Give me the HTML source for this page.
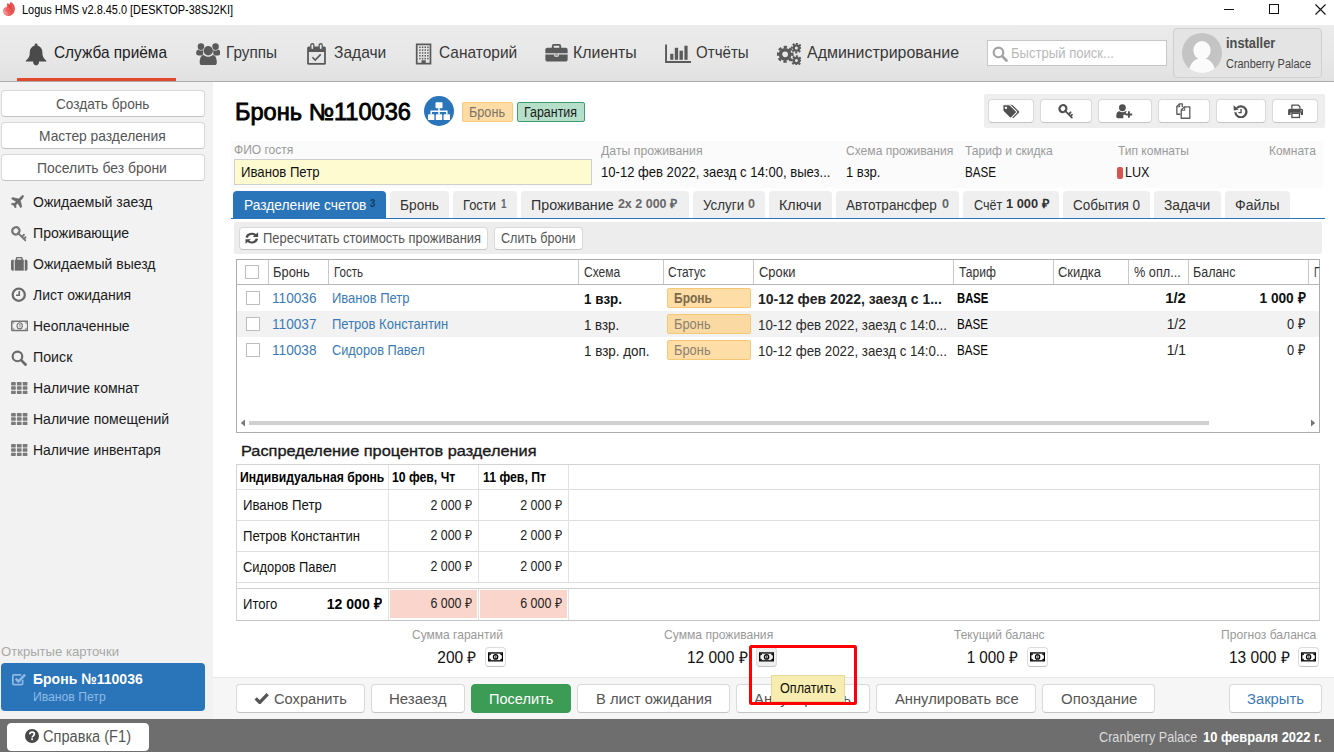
<!DOCTYPE html>
<html lang="ru"><head><meta charset="utf-8"><title>Logus HMS</title>
<style>
*{box-sizing:border-box;margin:0;padding:0}
html,body{width:1334px;height:752px;overflow:hidden;background:#fff;font-family:"Liberation Sans",sans-serif;color:#222}
.t{position:absolute;white-space:nowrap;line-height:1;transform-origin:0 50%}
.b{position:absolute}
.btn{position:absolute;background:#fff;border:1px solid #d9d9d9;border-bottom-color:#c4c4c4;border-radius:4px}
.tab{position:absolute;top:191px;height:27px;background:#efefef;border-radius:4px 4px 0 0}
.vl{position:absolute;width:1px;background:#c9c9c9}
.hl{position:absolute;height:1px;background:#dedede}
.cb{position:absolute;width:14px;height:14px;background:#fff;border:1px solid #bdbdbd}
.st{position:absolute;left:667px;width:84px;height:20px;background:rgba(253,205,125,.68);border:1px solid #f7c873;border-radius:2px}
.mb{position:absolute;width:21px;height:20px;background:#fff;border:1px solid #dcdcdc;border-bottom-color:#c2c2c2;border-radius:4px}
</style></head><body>
<div class="b" style="left:0;top:0;width:1334px;height:25px;background:#fff"></div>
<svg style="position:absolute;left:0px;top:0px" width="18" height="18" viewBox="0 0 18 18" ><defs><linearGradient id="lg" x1="0" y1="0" x2="1" y2="0"><stop offset="0" stop-color="#f39a98"/><stop offset=".55" stop-color="#e8423f"/><stop offset="1" stop-color="#ea5552"/></linearGradient></defs><path fill="url(#lg)" d="M10.500 2.100C13.500 3.500 15.300 6.500 14.900 9.600 14.500 13.300 11.800 16 8.300 16 5.200 16 2.900 13.700 2.900 10.800 2.900 8.600 4.600 6.900 7 6.900 6.800 5.600 6.900 4.200 7.300 3 8.200 3.300 9 3.900 9.700 4.600 9.800 3.700 10.100 2.900 10.500 2.100z"/><path d="M5.800 10.900a2.200 2.200 0 1 0 2.200-2.200M4.300 11.300a3.800 3.800 0 0 0 7.300 1" fill="none" stroke="#fff" stroke-width=".7" opacity=".38"/><path d="M10.300 4.200C12.300 5.700 13.300 8 12.900 10.500" fill="none" stroke="#fff" stroke-width=".6" opacity=".22"/></svg>
<div class="t" style="top:4px;font-size:12px;color:#000;left:22.00px;transform:scaleX(0.9099);">Logus HMS v2.8.45.0 [DESKTOP-38SJ2KI]</div>
<div class="b" style="left:1224px;top:9px;width:10px;height:1px;background:#111"></div>
<div class="b" style="left:1269px;top:4px;width:10px;height:10px;border:1px solid #111"></div>
<svg style="position:absolute;left:1314.500px;top:4px" width="11" height="11" viewBox="0 0 11 11"><path d="M.5.5l10 10M10.500.5l-10 10" stroke="#111" stroke-width="1.100" fill="none"/></svg>
<div class="b" style="left:0;top:25px;width:1334px;height:57px;background:linear-gradient(#ebebeb,#e7e7e7 60%,#e1e1e1);border-bottom:1px solid #adadad"></div>
<div class="b" style="left:17px;top:78px;width:159px;height:3px;background:#e2482e"></div>
<svg style="position:absolute;left:25.4px;top:42.9px" width="22.2" height="22.7" viewBox="0 0 24 24" preserveAspectRatio="none"><path fill="#4a4a4a" d="M12 .4c.9 0 1.500.6 1.500 1.500v.7c3.300.8 5.300 3.600 5.300 7 0 4.700 1.400 6.700 3.800 8.700.4.300.6.800.6 1.300H.8c0-.5.2-1 .6-1.300 2.400-2 3.800-4 3.800-8.700 0-3.400 2-6.200 5.300-7v-.7c0-.9.6-1.500 1.500-1.500zM8.900 19.600h6.200v1.100c0 1.700-1.400 3-3.100 3s-3.100-1.300-3.100-3z"/></svg>
<div class="t" style="top:44px;font-size:17px;color:#1d1d1d;left:53.70px;transform:scaleX(0.9059);">Служба приёма</div>
<svg style="position:absolute;left:195.5px;top:42.8px" width="24.5" height="22.4" viewBox="0 0 26 24" ><g fill="#5a5a5a"><circle cx="5.200" cy="3.900" r="3.500"/><circle cx="20.800" cy="3.900" r="3.500"/><path d="M0 10.800C0 8.400 1 7.200 2.600 7.200c.800.600 1.700.900 2.600.900s1.800-.300 2.600-.900l1.400.800c-1.600 1.400-2 3.200-1.600 5.400L2.600 13.500C1 13.500 0 12.500 0 10.800z"/><path d="M0 10.800C0 8.400 1 7.200 2.600 7.200c.800.600 1.700.900 2.600.900s1.800-.300 2.600-.900l1.400.800c-1.600 1.400-2 3.200-1.600 5.400L2.600 13.500C1 13.500 0 12.500 0 10.800z" transform="translate(26 0) scale(-1 1)"/><circle cx="13" cy="8.300" r="5" stroke="#e8e8e8" stroke-width="1.100" paint-order="stroke"/><path stroke="#e8e8e8" stroke-width=".9" paint-order="stroke" d="M3.800 21c0-5 1.700-8.200 4.400-8.200 1.300 1.200 3 1.900 4.800 1.900s3.500-.700 4.800-1.900c2.700 0 4.400 3.200 4.400 8.200 0 1.800-1.200 3-2.900 3H6.700c-1.700 0-2.900-1.200-2.900-3z"/></g></svg>
<div class="t" style="top:44px;font-size:17px;color:#383838;left:226.40px;transform:scaleX(0.9002);">Группы</div>
<svg style="position:absolute;left:306px;top:43px" width="21" height="22.5" viewBox="0 0 22 24" ><rect x="1" y="3.800" width="20" height="19.400" rx="1.700" fill="#5a5a5a"/><rect x="2.900" y="9.600" width="16.200" height="11.700" fill="#e7e7e7"/><rect x="4.900" y=".8" width="3.300" height="6.200" rx="1.500" fill="#e7e7e7" stroke="#5a5a5a" stroke-width="1.400"/><rect x="13.800" y=".8" width="3.300" height="6.200" rx="1.500" fill="#e7e7e7" stroke="#5a5a5a" stroke-width="1.400"/><path fill="none" stroke="#5a5a5a" stroke-width="1.700" d="M6.600 15.200l3 3 5.900-6.100"/></svg>
<div class="t" style="top:44px;font-size:17px;color:#383838;left:334.20px;transform:scaleX(0.9163);">Задачи</div>
<svg style="position:absolute;left:414.8px;top:43.2px" width="17.2" height="22" viewBox="0 0 18 24" ><rect x="1.500" y="1.500" width="15" height="21" fill="none" stroke="#5a5a5a" stroke-width="1.900"/><g fill="#5a5a5a"><rect x="4.2" y="3.8" width="1.600" height="1.700"/><rect x="7.1" y="3.8" width="1.600" height="1.700"/><rect x="10.0" y="3.8" width="1.600" height="1.700"/><rect x="12.9" y="3.8" width="1.600" height="1.700"/><rect x="4.2" y="6.9" width="1.600" height="1.700"/><rect x="7.1" y="6.9" width="1.600" height="1.700"/><rect x="10.0" y="6.9" width="1.600" height="1.700"/><rect x="12.9" y="6.9" width="1.600" height="1.700"/><rect x="4.2" y="10.0" width="1.600" height="1.700"/><rect x="7.1" y="10.0" width="1.600" height="1.700"/><rect x="10.0" y="10.0" width="1.600" height="1.700"/><rect x="12.9" y="10.0" width="1.600" height="1.700"/><rect x="4.2" y="13.1" width="1.600" height="1.700"/><rect x="7.1" y="13.1" width="1.600" height="1.700"/><rect x="10.0" y="13.1" width="1.600" height="1.700"/><rect x="12.9" y="13.1" width="1.600" height="1.700"/><rect x="4.2" y="16.2" width="1.600" height="1.700"/><rect x="7.1" y="16.2" width="1.600" height="1.700"/><rect x="10.0" y="16.2" width="1.600" height="1.700"/><rect x="12.9" y="16.2" width="1.600" height="1.700"/><rect x="6.700" y="18.800" width="4.600" height="4"/></g></svg>
<div class="t" style="top:44px;font-size:17px;color:#383838;left:438.50px;transform:scaleX(0.9105);">Санаторий</div>
<svg style="position:absolute;left:545px;top:43.2px" width="23" height="19.5" viewBox="0 0 24 21" ><path fill="none" stroke="#5a5a5a" stroke-width="2" d="M8 5.500V3.200c0-.700.500-1.200 1.200-1.200h5.600c.700 0 1.200.5 1.200 1.200v2.300"/><path fill="#5a5a5a" d="M2.200 5h19.600c1.200 0 2.200 1 2.200 2.200V11H0V7.200C0 6 1 5 2.200 5zM0 12.400h9.600v1.400c0 .6.400 1 1 1h2.800c.6 0 1-.4 1-1v-1.400H24v5.400c0 1.200-1 2.200-2.200 2.200H2.200C1 20 0 19 0 17.800z"/><rect x="10.600" y="11.600" width="2.800" height="2.200" fill="#5a5a5a" opacity=".55"/></svg>
<div class="t" style="top:44px;font-size:17px;color:#383838;left:573.00px;transform:scaleX(0.9359);">Клиенты</div>
<svg style="position:absolute;left:664.8px;top:44.3px" width="26" height="19.2" viewBox="0 0 26 19.2" ><path fill="none" stroke="#5a5a5a" stroke-width="1.900" d="M1.050 .6v17.450H26"/><g fill="#5a5a5a"><rect x="5.200" y="9.800" width="3.200" height="6"/><rect x="9.800" y="3.800" width="3.300" height="12"/><rect x="14.500" y="6.700" width="3.400" height="9.100"/><rect x="19.400" y="1.700" width="3.200" height="14.100"/></g></svg>
<div class="t" style="top:44px;font-size:17px;color:#383838;left:696.00px;transform:scaleX(0.8883);">Отчёты</div>
<svg style="position:absolute;left:776.8px;top:42.8px" width="24.4" height="22.3" viewBox="0 0 24.4 22.3" ><circle cx="8.1" cy="11.3" r="4.65" fill="none" stroke="#5a5a5a" stroke-width="3.50"/><circle cx="8.1" cy="11.3" r="7.25" fill="none" stroke="#5a5a5a" stroke-width="2.60" stroke-dasharray="3.19 2.51" transform="rotate(-12.60 8.1 11.3)"/><circle cx="19.4" cy="5" r="2.65" fill="none" stroke="#5a5a5a" stroke-width="2.30"/><circle cx="19.4" cy="5" r="4.40" fill="none" stroke="#5a5a5a" stroke-width="2.10" stroke-dasharray="2.00 1.45" transform="rotate(-13.05 19.4 5)"/><circle cx="19.4" cy="17.6" r="2.65" fill="none" stroke="#5a5a5a" stroke-width="2.30"/><circle cx="19.4" cy="17.6" r="4.40" fill="none" stroke="#5a5a5a" stroke-width="2.10" stroke-dasharray="2.00 1.45" transform="rotate(-13.05 19.4 17.6)"/></svg>
<div class="t" style="top:44px;font-size:17px;color:#383838;left:807.30px;transform:scaleX(0.9376);">Администрирование</div>
<div class="b" style="left:987px;top:40px;width:180px;height:26px;background:#fff;border:1px solid #c6c6c6"></div>
<svg style="position:absolute;left:992px;top:46.3px" width="16" height="16" viewBox="0 0 21 21" ><circle cx="8.500" cy="8.500" r="6.300" fill="none" stroke="#a2a2a2" stroke-width="2.8"/><path d="M13.300 13.300L19 19" stroke="#a2a2a2" stroke-width="3.5999999999999996" stroke-linecap="round"/></svg>
<div class="t" style="top:45px;font-size:15px;color:#b9b9b9;left:1011.00px;transform:scaleX(0.8723);">Быстрый поиск...</div>
<div class="b" style="left:1173px;top:28px;width:149px;height:50px;background:#e4e4e4;border:1px solid #cfcfcf;border-radius:4px"></div>
<svg style="position:absolute;left:1182px;top:33px" width="40" height="40" viewBox="0 0 40 40" ><defs><clipPath id="avc"><circle cx="20" cy="20" r="20"/></clipPath></defs><circle cx="20" cy="20" r="20" fill="#c4c4c4"/><g clip-path="url(#avc)" fill="#fbfbfb"><ellipse cx="20" cy="17.300" rx="8.600" ry="9.300"/><path d="M6.500 41c0-8 4.500-13.500 8.500-15h10c4 1.500 8.500 7 8.500 15z"/></g></svg>
<div class="t" style="top:36px;font-size:14.5px;color:#4d4d4d;font-weight:700;left:1225.80px;transform:scaleX(0.8865);">installer</div>
<div class="t" style="top:58px;font-size:12.5px;color:#444;left:1225.80px;transform:scaleX(0.8739);">Cranberry Palace</div>
<div class="b" style="left:0;top:82px;width:213px;height:637px;background:#f2f2f2"></div>
<div class="btn" style="left:1px;top:90px;width:204px;height:27px"></div>
<div class="t" style="top:96px;font-size:15px;color:#555;left:56.30px;transform:scaleX(0.9108);">Создать бронь</div>
<div class="btn" style="left:1px;top:122px;width:204px;height:27px"></div>
<div class="t" style="top:128px;font-size:15px;color:#555;left:39.20px;transform:scaleX(0.9207);">Мастер разделения</div>
<div class="btn" style="left:1px;top:154px;width:204px;height:27px"></div>
<div class="t" style="top:160px;font-size:15px;color:#555;left:37.40px;transform:scaleX(0.9287);">Поселить без брони</div>
<div class="t" style="top:194px;font-size:15.2px;color:#1c1c1c;left:33.30px;transform:scaleX(0.9227);">Ожидаемый заезд</div>
<svg style="position:absolute;left:10.3px;top:194.7px" width="14.5" height="14.5" viewBox="0 0 23 24" ><path fill="#6a6a6a" d="M21.600.9c1.300-.500 2.100.3 1.600 1.600-.600 1.600-1.600 3.200-2.800 4.400l-2.300 2.300 2.300 10.300-1.900 1.500-4.500-7.700-3.400 3.400c.2 1 .4 2.500.4 3.600l-1.300 1.300-2.300-4.300L3 15l1.300-1.300c1.100 0 2.600.2 3.600.4l3.400-3.400L3.600 6.200l1.500-1.900 10.300 2.300 2.300-2.300C18.900 3.100 20.400 1.500 21.600.9z" transform="translate(-1.500 0)" stroke="#6a6a6a" stroke-width="1.100" stroke-linejoin="round"/></svg>
<div class="t" style="top:225px;font-size:15.2px;color:#1c1c1c;left:33.30px;transform:scaleX(0.9299);">Проживающие</div>
<svg style="position:absolute;left:11px;top:225.5px" width="16" height="16" viewBox="0 0 23 23" ><ellipse cx="7" cy="7" rx="5.400" ry="5.100" fill="none" stroke="#777" stroke-width="3.300" transform="rotate(-45 7 7)"/><path d="M10.500 10.500L20.500 20.500M15.600 15.600l3-3M18.400 18.600l2.400-2.400" fill="none" stroke="#777" stroke-width="2.700" stroke-linecap="round"/></svg>
<div class="t" style="top:256px;font-size:15.2px;color:#1c1c1c;left:33.30px;transform:scaleX(0.9219);">Ожидаемый выезд</div>
<svg style="position:absolute;left:11px;top:256px" width="16.5" height="15.5" viewBox="0 0 24 22" ><path fill="none" stroke="#6a6a6a" stroke-width="2" d="M8 5.500V3.100c0-.600.500-1.100 1.100-1.100h5.800c.600 0 1.100.5 1.100 1.100v2.400"/><g fill="#6a6a6a"><rect x="5.400" y="5" width="13.200" height="16"/><path d="M2.200 5H4v16H2.200C1 21 0 20 0 18.800V7.200C0 6 1 5 2.200 5zM20 5h1.800C23 5 24 6 24 7.200v11.600c0 1.200-1 2.200-2.200 2.200H20z"/></g></svg>
<div class="t" style="top:287px;font-size:15.2px;color:#1c1c1c;left:33.30px;transform:scaleX(0.9198);">Лист ожидания</div>
<svg style="position:absolute;left:10.8px;top:287.2px" width="15.5" height="15.5" viewBox="0 0 22 22" ><circle cx="11" cy="11" r="8.600" fill="none" stroke="#6a6a6a" stroke-width="3.200"/><path d="M11.700 5.800v6H7.200" fill="none" stroke="#6a6a6a" stroke-width="2.300"/></svg>
<div class="t" style="top:318px;font-size:15.2px;color:#1c1c1c;left:33.30px;transform:scaleX(0.9151);">Неоплаченные</div>
<svg style="position:absolute;left:10.8px;top:320.2px" width="17.4" height="11.6" viewBox="0 0 26 16" ><rect x="1.100" y="1.100" width="23.800" height="13.800" rx=".8" fill="#f2f2f2" stroke="#777" stroke-width="2.200"/><path fill="#777" d="M2 2h3.600A3.600 3.600 0 0 1 2 5.600zM24 2h-3.600A3.600 3.600 0 0 0 24 5.600zM2 14h3.600A3.600 3.600 0 0 0 2 10.400zM24 14h-3.600A3.600 3.600 0 0 1 24 10.400z" opacity=".55"/><ellipse cx="13" cy="8" rx="4" ry="4.600" fill="#f2f2f2" stroke="#777" stroke-width="1.700"/><path d="M12.100 6.700l1.300-.9v4.600" fill="none" stroke="#777" stroke-width="1.300"/></svg>
<div class="t" style="top:349px;font-size:15.2px;color:#1c1c1c;left:33.30px;transform:scaleX(0.9360);">Поиск</div>
<svg style="position:absolute;left:11px;top:349.5px" width="16" height="16" viewBox="0 0 21 21" ><circle cx="8.500" cy="8.500" r="6.300" fill="none" stroke="#6a6a6a" stroke-width="2.8"/><path d="M13.300 13.300L19 19" stroke="#6a6a6a" stroke-width="3.5999999999999996" stroke-linecap="round"/></svg>
<div class="t" style="top:380px;font-size:15.2px;color:#1c1c1c;left:33.30px;transform:scaleX(0.9245);">Наличие комнат</div>
<svg style="position:absolute;left:11px;top:382px" width="16.5" height="12" viewBox="0 0 17.4 12.8" ><g fill="#7a7a7a"><rect x="0.0" y="0.0" width="5" height="3.600" rx=".5"/><rect x="6.2" y="0.0" width="5" height="3.600" rx=".5"/><rect x="12.4" y="0.0" width="5" height="3.600" rx=".5"/><rect x="0.0" y="4.6" width="5" height="3.600" rx=".5"/><rect x="6.2" y="4.6" width="5" height="3.600" rx=".5"/><rect x="12.4" y="4.6" width="5" height="3.600" rx=".5"/><rect x="0.0" y="9.2" width="5" height="3.600" rx=".5"/><rect x="6.2" y="9.2" width="5" height="3.600" rx=".5"/><rect x="12.4" y="9.2" width="5" height="3.600" rx=".5"/></g></svg>
<div class="t" style="top:411px;font-size:15.2px;color:#1c1c1c;left:33.30px;transform:scaleX(0.9226);">Наличие помещений</div>
<svg style="position:absolute;left:11px;top:413px" width="16.5" height="12" viewBox="0 0 17.4 12.8" ><g fill="#7a7a7a"><rect x="0.0" y="0.0" width="5" height="3.600" rx=".5"/><rect x="6.2" y="0.0" width="5" height="3.600" rx=".5"/><rect x="12.4" y="0.0" width="5" height="3.600" rx=".5"/><rect x="0.0" y="4.6" width="5" height="3.600" rx=".5"/><rect x="6.2" y="4.6" width="5" height="3.600" rx=".5"/><rect x="12.4" y="4.6" width="5" height="3.600" rx=".5"/><rect x="0.0" y="9.2" width="5" height="3.600" rx=".5"/><rect x="6.2" y="9.2" width="5" height="3.600" rx=".5"/><rect x="12.4" y="9.2" width="5" height="3.600" rx=".5"/></g></svg>
<div class="t" style="top:442px;font-size:15.2px;color:#1c1c1c;left:33.30px;transform:scaleX(0.9176);">Наличие инвентаря</div>
<svg style="position:absolute;left:11px;top:444px" width="16.5" height="12" viewBox="0 0 17.4 12.8" ><g fill="#7a7a7a"><rect x="0.0" y="0.0" width="5" height="3.600" rx=".5"/><rect x="6.2" y="0.0" width="5" height="3.600" rx=".5"/><rect x="12.4" y="0.0" width="5" height="3.600" rx=".5"/><rect x="0.0" y="4.6" width="5" height="3.600" rx=".5"/><rect x="6.2" y="4.6" width="5" height="3.600" rx=".5"/><rect x="12.4" y="4.6" width="5" height="3.600" rx=".5"/><rect x="0.0" y="9.2" width="5" height="3.600" rx=".5"/><rect x="6.2" y="9.2" width="5" height="3.600" rx=".5"/><rect x="12.4" y="9.2" width="5" height="3.600" rx=".5"/></g></svg>
<div class="t" style="top:645px;font-size:13px;color:#a8a8a8;left:1.00px;transform:scaleX(1.0077);">Открытые карточки</div>
<div class="b" style="left:1px;top:663px;width:204px;height:48px;background:#2a74ba;border-radius:4px"></div>
<svg style="position:absolute;left:10.8px;top:672.3px" width="15.6" height="14" viewBox="0 0 21 20" ><path d="M16 11v5.300c0 1-.8 1.700-1.700 1.700H3.700C2.800 18 2 17.300 2 16.300V5.700C2 4.800 2.800 4 3.700 4H14" fill="none" stroke="#8db9e3" stroke-width="2.500" /><path d="M6 9.500l4 4 9.500-9.700" fill="none" stroke="#8db9e3" stroke-width="3.500"/></svg>
<div class="t" style="top:671px;font-size:15.5px;color:#fff;font-weight:700;left:33.00px;transform:scaleX(0.9035);">Бронь №110036</div>
<div class="t" style="top:690px;font-size:13px;color:#8fbae4;left:33.00px;transform:scaleX(0.9369);">Иванов Петр</div>
<div class="t" style="top:101px;font-size:23.2px;color:#000;left:235.00px;transform:scaleX(1.0181);-webkit-text-stroke:.8px #000;">Бронь №110036</div>
<div class="b" style="left:424px;top:96px;width:30px;height:30px;border-radius:50%;background:#2a74ba"></div>
<svg style="position:absolute;left:428.3px;top:101.6px" width="22" height="18.4" viewBox="0 0 22 18" ><g fill="#fff"><rect x="7.500" y="0" width="7" height="6" rx=".8"/><rect x="0" y="12" width="6.400" height="6" rx=".8"/><rect x="7.800" y="12" width="6.400" height="6" rx=".8"/><rect x="15.600" y="12" width="6.400" height="6" rx=".8"/></g><path d="M11 6v6M3.200 12V9h15.600v3" fill="none" stroke="#fff" stroke-width="1.500"/></svg>
<div class="b" style="left:462px;top:102px;width:51px;height:20px;background:#fddca6;border:1px solid #fbc978;border-radius:2px"></div>
<div class="t" style="top:105px;font-size:14px;color:#7b7568;left:469.40px;transform:scaleX(0.9046);">Бронь</div>
<div class="b" style="left:517px;top:102px;width:68px;height:20px;background:#b5dfc9;border:1px solid #3f9f73;border-radius:2px"></div>
<div class="t" style="top:105px;font-size:14px;color:#1c1c1c;left:524.30px;transform:scaleX(0.8877);">Гарантия</div>
<div class="b" style="left:984px;top:94px;width:341px;height:34px;background:#eee;border-radius:2px"></div>
<div class="btn" style="left:988px;top:99px;width:46px;height:24px"></div>
<svg style="position:absolute;left:1001.6px;top:103.8px" width="17.8" height="14.8" viewBox="0 0 21.5 18" ><path fill="#505050" d="M1 1.800C1 1.300 1.300 1 1.800 1H8.600c.5 0 1.100.25 1.500.6l7.300 7.300c.5.500.5 1.200 0 1.700l-6.200 6.200c-.5.500-1.200.5-1.700 0L2.200 9.500C1.850 9.100 1 8.500 1 8z" transform="translate(3 0)"/><path fill="#505050" stroke="#fff" stroke-width="1.300" d="M1 1.800C1 1.300 1.300 1 1.800 1H8.600c.5 0 1.100.25 1.500.6l7.300 7.300c.5.500.5 1.200 0 1.700l-6.200 6.200c-.5.500-1.200.5-1.700 0L2.200 9.500C1.850 9.100 1 8.500 1 8z"/><circle cx="4.700" cy="4.700" r="1.500" fill="#fff"/></svg>
<div class="btn" style="left:1040px;top:99px;width:52px;height:24px"></div>
<svg style="position:absolute;left:1058.0px;top:103.8px" width="15.8" height="15.2" viewBox="0 0 23 23" ><ellipse cx="7" cy="7" rx="5.400" ry="5.100" fill="none" stroke="#505050" stroke-width="3.300" transform="rotate(-45 7 7)"/><path d="M10.500 10.500L20.500 20.500M15.600 15.600l3-3M18.400 18.600l2.400-2.400" fill="none" stroke="#505050" stroke-width="2.700" stroke-linecap="round"/></svg>
<div class="btn" style="left:1098px;top:99px;width:54px;height:24px"></div>
<svg style="position:absolute;left:1115.4px;top:104px" width="18.8" height="14.5" viewBox="0 0 22.500 20" ><circle cx="8.500" cy="5.200" r="4.700" fill="#505050"/><path fill="#505050" d="M2.400 19.500C1 19.500 0 18.600 0 17.200 0 13.400 1.300 10 4.500 10c1.100.9 2.500 1.500 4 1.500s2.900-.6 4-1.500c1.100 0 2 .4 2.700 1.100H13.400v3.600H9.800v4.800z"/><path d="M17.500 10v9M13 14.500h9" stroke="#505050" stroke-width="2.500" fill="none"/></svg>
<div class="btn" style="left:1158px;top:99px;width:52px;height:24px"></div>
<svg style="position:absolute;left:1175.4px;top:103px" width="16.8" height="16" viewBox="0 0 20 22" ><path d="M8.500 5.500V1.200h-4L1 4.700v10.800h5" fill="none" stroke="#5c5c5c" stroke-width="1.800" stroke-linejoin="round"/><path d="M1 5h3.800V1.200" fill="none" stroke="#5c5c5c" stroke-width="1.400"/><path d="M11.500 5.200h7.300V21H7V9.700z" fill="#fff" stroke="#5c5c5c" stroke-width="1.800" stroke-linejoin="round"/><path d="M7 10h4.800V5.200" fill="none" stroke="#5c5c5c" stroke-width="1.400"/></svg>
<div class="btn" style="left:1216px;top:99px;width:50px;height:24px"></div>
<svg style="position:absolute;left:1233.2px;top:103.6px" width="14.8" height="14.8" viewBox="0 0 22 22" ><path d="M3.500 12.300a8.200 8.200 0 1 0 2.300-6.400" fill="none" stroke="#505050" stroke-width="3.400"/><path d="M.8 2l.4 7.600 7.300-1.500z" fill="#505050"/><path d="M12 7.500v5.300h-4" fill="none" stroke="#505050" stroke-width="2"/></svg>
<div class="btn" style="left:1272px;top:99px;width:46px;height:24px"></div>
<svg style="position:absolute;left:1287.8px;top:104px" width="15.4" height="14.5" viewBox="0 0 22 21" ><path d="M5.500 7V1.500h9l2.500 2.500v3" fill="#fff" stroke="#505050" stroke-width="1.900" stroke-linejoin="round"/><path fill="#505050" d="M2.500 7h17c1.400 0 2.500 1.100 2.500 2.500V16h-3.500v-3.500h-15V16H0V9.500C0 8.100 1.100 7 2.500 7z"/><rect x="5.500" y="13.500" width="11" height="6" fill="#fff" stroke="#505050" stroke-width="1.900"/><circle cx="18.800" cy="9.800" r=".9" fill="#fff"/></svg>
<div class="b" style="left:231px;top:141px;width:1092px;height:47px;background:#fbfbfb"></div>
<div class="t" style="top:143px;font-size:13px;color:#9a9a9a;left:233.90px;transform:scaleX(0.9245);">ФИО гостя</div>
<div class="b" style="left:234px;top:159px;width:358px;height:26px;background:#fffbd1;border:1px solid #cfcfcf"></div>
<div class="t" style="top:164px;font-size:15px;color:#111;left:240.90px;transform:scaleX(0.8779);">Иванов Петр</div>
<div class="t" style="top:144px;font-size:13px;color:#9a9a9a;left:601.40px;transform:scaleX(0.9455);">Даты проживания</div>
<div class="t" style="top:164px;font-size:15px;color:#111;left:601.40px;transform:scaleX(0.8708);">10-12 фев 2022, заезд с 14:00, выез...</div>
<div class="t" style="top:144px;font-size:13px;color:#9a9a9a;left:845.50px;transform:scaleX(0.9286);">Схема проживания</div>
<div class="t" style="top:164px;font-size:15px;color:#111;left:845.50px;transform:scaleX(0.8689);">1 взр.</div>
<div class="t" style="top:144px;font-size:13px;color:#9a9a9a;left:965.00px;transform:scaleX(0.9291);">Тариф и скидка</div>
<div class="t" style="top:164px;font-size:15px;color:#111;left:965.00px;transform:scaleX(0.7744);">BASE</div>
<div class="t" style="top:144px;font-size:13px;color:#9a9a9a;left:1117.50px;transform:scaleX(0.9229);">Тип комнаты</div>
<div class="b" style="left:1117px;top:166.500px;width:6px;height:12px;background:#d9534f;border-radius:2px"></div>
<div class="t" style="top:164px;font-size:15px;color:#111;left:1125.00px;transform:scaleX(0.8394);">LUX</div>
<div class="t" style="top:144px;font-size:13px;color:#9a9a9a;left:1269.00px;transform:scaleX(0.9193);">Комната</div>
<div class="b" style="left:231px;top:218px;width:1094px;height:1px;background:#2a74ba"></div>
<div class="tab" style="left:233px;width:153px;background:#2a74ba;"></div>
<div class="t" style="top:197px;font-size:15.5px;color:#fff;left:243.60px;transform:scaleX(0.8899);">Разделение счетов</div>
<div class="t" style="top:198px;font-size:10.5px;color:#153a60;font-weight:700;left:370.40px;transform:scaleX(0.9070);">3</div>
<div class="tab" style="left:390px;width:59px;"></div>
<div class="t" style="top:197px;font-size:15.5px;color:#333;left:400.40px;transform:scaleX(0.8851);">Бронь</div>
<div class="tab" style="left:453px;width:64px;"></div>
<div class="t" style="top:197px;font-size:15.5px;color:#333;left:463.40px;transform:scaleX(0.8358);">Гости</div>
<div class="t" style="top:198px;font-size:12px;color:#666;font-weight:700;left:500.60px;transform:scaleX(0.8224);">1</div>
<div class="tab" style="left:521px;width:168px;"></div>
<div class="t" style="top:197px;font-size:15.5px;color:#333;left:531.40px;transform:scaleX(0.9202);">Проживание</div>
<div class="t" style="top:198px;font-size:12.5px;color:#666;font-weight:700;left:617.90px;">2x 2 000 ₽</div>
<div class="tab" style="left:693px;width:72px;"></div>
<div class="t" style="top:197px;font-size:15.5px;color:#333;left:703.30px;transform:scaleX(0.8621);">Услуги</div>
<div class="t" style="top:198px;font-size:12px;color:#666;font-weight:700;left:748.00px;transform:scaleX(1.0467);">0</div>
<div class="tab" style="left:769px;width:63px;"></div>
<div class="t" style="top:197px;font-size:15.5px;color:#333;left:779.00px;transform:scaleX(0.9220);">Ключи</div>
<div class="tab" style="left:836px;width:123px;"></div>
<div class="t" style="top:197px;font-size:15.5px;color:#333;left:846.40px;transform:scaleX(0.8723);">Автотрансфер</div>
<div class="t" style="top:198px;font-size:12px;color:#666;font-weight:700;left:941.70px;transform:scaleX(1.0467);">0</div>
<div class="tab" style="left:963px;width:96px;"></div>
<div class="t" style="top:197px;font-size:15.5px;color:#333;left:973.60px;transform:scaleX(0.8097);">Счёт</div>
<div class="t" style="top:198px;font-size:12.5px;color:#333;font-weight:700;left:1006.40px;transform:scaleX(1.0272);">1 000 ₽</div>
<div class="tab" style="left:1063px;width:87px;"></div>
<div class="t" style="top:197px;font-size:15.5px;color:#333;left:1073.20px;transform:scaleX(0.8723);">События 0</div>
<div class="tab" style="left:1154px;width:67px;"></div>
<div class="t" style="top:197px;font-size:15.5px;color:#333;left:1164.20px;transform:scaleX(0.8896);">Задачи</div>
<div class="tab" style="left:1225px;width:65px;"></div>
<div class="t" style="top:197px;font-size:15.5px;color:#333;left:1235.00px;transform:scaleX(0.9056);">Файлы</div>
<div class="b" style="left:234px;top:222px;width:1088px;height:32px;background:#ededed;border-radius:2px"></div>
<div class="btn" style="left:239px;top:227px;width:249px;height:23px"></div>
<svg style="position:absolute;left:245.3px;top:232.3px" width="13.6" height="12.2" viewBox="0 0 20 21" preserveAspectRatio="none"><path d="M2.600 9.500A7.400 7.400 0 0 1 15.600 5.600" fill="none" stroke="#4a4a4a" stroke-width="3.600"/><path d="M19.300 .6v8h-8z" fill="#4a4a4a"/><path d="M17.400 11.500A7.400 7.400 0 0 1 4.400 15.400" fill="none" stroke="#4a4a4a" stroke-width="3.600"/><path d="M.7 20.400v-8h8z" fill="#4a4a4a"/></svg>
<div class="t" style="top:231px;font-size:14px;color:#555;left:262.50px;transform:scaleX(0.9239);">Пересчитать стоимость проживания</div>
<div class="btn" style="left:494px;top:227px;width:89px;height:23px"></div>
<div class="t" style="top:231px;font-size:14px;color:#555;left:501.20px;transform:scaleX(0.9005);">Слить брони</div>
<div class="b" style="left:236px;top:259px;width:1084px;height:174px;background:#fff;border:1px solid #adadad"></div>
<div class="b" style="left:237px;top:311px;width:1082px;height:26px;background:#f2f2f2"></div>
<div class="b" style="left:237px;top:284px;width:1082px;height:1px;background:#b5b5b5"></div>
<div class="vl" style="left:268px;top:260px;height:24px"></div>
<div class="vl" style="left:328px;top:260px;height:24px"></div>
<div class="vl" style="left:578px;top:260px;height:24px"></div>
<div class="vl" style="left:663px;top:260px;height:24px"></div>
<div class="vl" style="left:753px;top:260px;height:24px"></div>
<div class="vl" style="left:953px;top:260px;height:24px"></div>
<div class="vl" style="left:1053px;top:260px;height:24px"></div>
<div class="vl" style="left:1128px;top:260px;height:24px"></div>
<div class="vl" style="left:1188px;top:260px;height:24px"></div>
<div class="vl" style="left:1308px;top:260px;height:24px"></div>
<div class="cb" style="left:245px;top:265px"></div>
<div class="t" style="top:265px;font-size:14px;color:#333;left:273.20px;transform:scaleX(0.9222);">Бронь</div>
<div class="t" style="top:265px;font-size:14px;color:#333;left:333.90px;transform:scaleX(0.8281);">Гость</div>
<div class="t" style="top:265px;font-size:14px;color:#333;left:583.50px;transform:scaleX(0.8587);">Схема</div>
<div class="t" style="top:265px;font-size:14px;color:#333;left:668.20px;transform:scaleX(0.8539);">Статус</div>
<div class="t" style="top:265px;font-size:14px;color:#333;left:758.60px;transform:scaleX(0.9208);">Сроки</div>
<div class="t" style="top:265px;font-size:14px;color:#333;left:958.60px;transform:scaleX(0.8613);">Тариф</div>
<div class="t" style="top:265px;font-size:14px;color:#333;left:1058.00px;transform:scaleX(0.9257);">Скидка</div>
<div class="t" style="top:265px;font-size:14px;color:#333;left:1133.50px;transform:scaleX(0.9079);">% опл...</div>
<div class="t" style="top:265px;font-size:14px;color:#333;left:1193.00px;transform:scaleX(0.8915);">Баланс</div>
<div class="t" style="top:265px;font-size:14px;color:#333;left:1313.90px;transform:scaleX(0.7243);">Г</div>
<div class="cb" style="left:246px;top:291px"></div>
<div class="t" style="top:290px;font-size:15px;color:#3a7ab8;left:271.80px;transform:scaleX(0.9090);">110036</div>
<div class="t" style="top:290px;font-size:15px;color:#3a7ab8;left:331.70px;transform:scaleX(0.8656);">Иванов Петр</div>
<div class="t" style="top:291px;font-size:15px;color:#111;font-weight:700;left:584.00px;transform:scaleX(0.8935);">1 взр.</div>
<div class="st" style="top:288px"></div>
<div class="t" style="top:291px;font-size:14.5px;color:#7d6a48;font-weight:700;left:674.40px;transform:scaleX(0.8295);">Бронь</div>
<div class="t" style="top:291px;font-size:15px;color:#222;font-weight:700;left:758.20px;transform:scaleX(0.9314);">10-12 фев 2022, заезд с 1...</div>
<div class="t" style="top:290px;font-size:15px;color:#000;font-weight:700;left:956.80px;transform:scaleX(0.7532);">BASE</div>
<div class="t" style="top:290px;font-size:15px;color:#111;font-weight:700;right:148.00px;transform:scaleX(0.9924);transform-origin:100% 50%;">1/2</div>
<div class="t" style="top:290px;font-size:15px;color:#111;font-weight:700;right:28.00px;transform:scaleX(0.9109);transform-origin:100% 50%;">1 000 ₽</div>
<div class="cb" style="left:246px;top:317px"></div>
<div class="t" style="top:316px;font-size:15px;color:#3a7ab8;left:271.80px;transform:scaleX(0.9090);">110037</div>
<div class="t" style="top:316px;font-size:15px;color:#3a7ab8;left:331.70px;transform:scaleX(0.8676);">Петров Константин</div>
<div class="t" style="top:317px;font-size:15px;color:#222;left:584.00px;transform:scaleX(0.8841);">1 взр.</div>
<div class="st" style="top:314px"></div>
<div class="t" style="top:317px;font-size:14.5px;color:#8a8170;left:674.40px;transform:scaleX(0.8879);">Бронь</div>
<div class="t" style="top:317px;font-size:15px;color:#2a2a2a;left:758.20px;transform:scaleX(0.8868);">10-12 фев 2022, заезд с 14:0...</div>
<div class="t" style="top:316px;font-size:15px;color:#000;left:956.80px;transform:scaleX(0.7744);">BASE</div>
<div class="t" style="top:316px;font-size:15px;color:#222;right:148.00px;transform:scaleX(0.9204);transform-origin:100% 50%;">1/2</div>
<div class="t" style="top:316px;font-size:15px;color:#222;right:28.00px;transform:scaleX(0.8552);transform-origin:100% 50%;">0 ₽</div>
<div class="cb" style="left:246px;top:343px"></div>
<div class="t" style="top:342px;font-size:15px;color:#3a7ab8;left:271.80px;transform:scaleX(0.9090);">110038</div>
<div class="t" style="top:342px;font-size:15px;color:#3a7ab8;left:331.70px;transform:scaleX(0.8522);">Сидоров Павел</div>
<div class="t" style="top:343px;font-size:15px;color:#222;left:584.00px;transform:scaleX(0.8942);">1 взр. доп.</div>
<div class="st" style="top:340px"></div>
<div class="t" style="top:343px;font-size:14.5px;color:#8a8170;left:674.40px;transform:scaleX(0.8879);">Бронь</div>
<div class="t" style="top:343px;font-size:15px;color:#2a2a2a;left:758.20px;transform:scaleX(0.8868);">10-12 фев 2022, заезд с 14:0...</div>
<div class="t" style="top:342px;font-size:15px;color:#000;left:956.80px;transform:scaleX(0.7744);">BASE</div>
<div class="t" style="top:342px;font-size:15px;color:#222;right:148.00px;transform:scaleX(0.9204);transform-origin:100% 50%;">1/1</div>
<div class="t" style="top:342px;font-size:15px;color:#222;right:28.00px;transform:scaleX(0.8552);transform-origin:100% 50%;">0 ₽</div>
<div class="b" style="left:249px;top:421px;width:960px;height:4px;background:#d0d0d0"></div>
<svg style="position:absolute;left:240px;top:419px" width="6" height="8" viewBox="0 0 6 8"><path d="M5 .5v7L.8 4z" fill="#777"/></svg>
<svg style="position:absolute;left:1310px;top:419px" width="6" height="8" viewBox="0 0 6 8"><path d="M1 .5v7L5.200 4z" fill="#777"/></svg>
<div class="t" style="top:443px;font-size:15.5px;color:#1a1a1a;left:240.80px;transform:scaleX(1.0542);-webkit-text-stroke:.35px #1a1a1a;">Распределение процентов разделения</div>
<div class="b" style="left:236px;top:464px;width:1084px;height:157px;background:#fff;border:1px solid #d3d3d3;border-bottom-color:#c4c4c4"></div>
<div class="hl" style="left:237px;top:489px;width:1082px"></div>
<div class="hl" style="left:237px;top:520px;width:1082px"></div>
<div class="hl" style="left:237px;top:551px;width:1082px"></div>
<div class="hl" style="left:237px;top:582px;width:1082px"></div>
<div class="b" style="left:237px;top:588px;width:1082px;height:1px;background:#cfcfcf"></div>
<div class="vl" style="left:388px;top:465px;height:117px;background:#e2e2e2"></div>
<div class="vl" style="left:388px;top:589px;height:31px;background:#e2e2e2"></div>
<div class="vl" style="left:478px;top:465px;height:117px;background:#e2e2e2"></div>
<div class="vl" style="left:478px;top:589px;height:31px;background:#e2e2e2"></div>
<div class="vl" style="left:568px;top:465px;height:117px;background:#e2e2e2"></div>
<div class="vl" style="left:568px;top:589px;height:31px;background:#e2e2e2"></div>
<div class="b" style="left:390px;top:590px;width:87px;height:28px;background:#f9d5cb"></div>
<div class="b" style="left:480px;top:590px;width:87px;height:28px;background:#f9d5cb"></div>
<div class="t" style="top:471px;font-size:13.8px;color:#000;font-weight:700;left:240.30px;transform:scaleX(0.8805);">Индивидуальная бронь</div>
<div class="t" style="top:471px;font-size:13.8px;color:#000;font-weight:700;left:392.40px;transform:scaleX(0.8859);">10 фев, Чт</div>
<div class="t" style="top:471px;font-size:13.8px;color:#000;font-weight:700;left:482.60px;transform:scaleX(0.8911);">11 фев, Пт</div>
<div class="t" style="top:498px;font-size:14.8px;color:#111;left:242.60px;transform:scaleX(0.8923);">Иванов Петр</div>
<div class="t" style="top:498px;font-size:14px;color:#222;right:862.00px;transform:scaleX(0.8842);transform-origin:100% 50%;">2 000 ₽</div>
<div class="t" style="top:498px;font-size:14px;color:#222;right:771.60px;transform:scaleX(0.8905);transform-origin:100% 50%;">2 000 ₽</div>
<div class="t" style="top:529px;font-size:14.8px;color:#111;left:242.60px;transform:scaleX(0.8855);">Петров Константин</div>
<div class="t" style="top:528px;font-size:14px;color:#222;right:862.00px;transform:scaleX(0.8842);transform-origin:100% 50%;">2 000 ₽</div>
<div class="t" style="top:528px;font-size:14px;color:#222;right:771.60px;transform:scaleX(0.8905);transform-origin:100% 50%;">2 000 ₽</div>
<div class="t" style="top:560px;font-size:14.8px;color:#111;left:242.60px;transform:scaleX(0.8714);">Сидоров Павел</div>
<div class="t" style="top:559px;font-size:14px;color:#222;right:862.00px;transform:scaleX(0.8842);transform-origin:100% 50%;">2 000 ₽</div>
<div class="t" style="top:559px;font-size:14px;color:#222;right:771.60px;transform:scaleX(0.8905);transform-origin:100% 50%;">2 000 ₽</div>
<div class="t" style="top:597px;font-size:14.8px;color:#111;left:242.60px;transform:scaleX(0.8844);">Итого</div>
<div class="t" style="top:596px;font-size:15.5px;color:#000;font-weight:700;right:952.00px;transform:scaleX(0.9042);transform-origin:100% 50%;">12 000 ₽</div>
<div class="t" style="top:596px;font-size:14px;color:#222;right:862.00px;transform:scaleX(0.8842);transform-origin:100% 50%;">6 000 ₽</div>
<div class="t" style="top:596px;font-size:14px;color:#222;right:771.60px;transform:scaleX(0.8905);transform-origin:100% 50%;">6 000 ₽</div>
<div class="t" style="top:628px;font-size:13px;color:#999;left:412.30px;transform:scaleX(0.9250);">Сумма гарантий</div>
<div class="t" style="top:650px;font-size:16px;color:#111;right:857.50px;transform:scaleX(0.9666);transform-origin:100% 50%;">200 ₽</div>
<div class="t" style="top:628px;font-size:13px;color:#999;left:664.30px;transform:scaleX(0.9313);">Сумма проживания</div>
<div class="t" style="top:650px;font-size:16px;color:#111;right:587.00px;transform:scaleX(0.9697);transform-origin:100% 50%;">12 000 ₽</div>
<div class="t" style="top:628px;font-size:13px;color:#999;left:954.20px;transform:scaleX(0.9199);">Текущий баланс</div>
<div class="t" style="top:650px;font-size:16px;color:#111;right:316.60px;transform:scaleX(0.9498);transform-origin:100% 50%;">1 000 ₽</div>
<div class="t" style="top:628px;font-size:13px;color:#999;left:1220.70px;transform:scaleX(0.9299);">Прогноз баланса</div>
<div class="t" style="top:650px;font-size:16px;color:#111;right:45.10px;transform:scaleX(0.9681);transform-origin:100% 50%;">13 000 ₽</div>
<div class="mb" style="left:485px;top:647px;"></div>
<svg style="position:absolute;left:488px;top:652px" width="15.2" height="9.8" viewBox="0 0 26 16" ><rect x="0" y="0" width="26" height="16" rx=".5" fill="#0a0a0a"/><rect x="2.300" y="2.400" width="21.400" height="11.200" fill="#fff"/><path fill="#0a0a0a" d="M2 2h3.400A3.400 3.400 0 0 1 2 5.400zM24 2h-3.400A3.400 3.400 0 0 0 24 5.400zM2 14h3.400A3.400 3.400 0 0 0 2 10.600zM24 14h-3.400A3.400 3.400 0 0 1 24 10.600z"/><ellipse cx="13" cy="8" rx="3.600" ry="3.900" fill="#fff" stroke="#0a0a0a" stroke-width="2.300"/><path d="M12 6.800l1.400-.9v4.400M11.900 10.400h3" fill="none" stroke="#0a0a0a" stroke-width="1.200"/></svg>
<div class="mb" style="left:756px;top:647px;background:#efefef;"></div>
<svg style="position:absolute;left:759px;top:652px" width="15.2" height="9.8" viewBox="0 0 26 16" ><rect x="0" y="0" width="26" height="16" rx=".5" fill="#0a0a0a"/><rect x="2.300" y="2.400" width="21.400" height="11.200" fill="#efefef"/><path fill="#0a0a0a" d="M2 2h3.400A3.400 3.400 0 0 1 2 5.400zM24 2h-3.400A3.400 3.400 0 0 0 24 5.400zM2 14h3.400A3.400 3.400 0 0 0 2 10.600zM24 14h-3.400A3.400 3.400 0 0 1 24 10.600z"/><ellipse cx="13" cy="8" rx="3.600" ry="3.900" fill="#efefef" stroke="#0a0a0a" stroke-width="2.300"/><path d="M12 6.800l1.400-.9v4.400M11.900 10.400h3" fill="none" stroke="#0a0a0a" stroke-width="1.200"/></svg>
<div class="mb" style="left:1027px;top:647px;"></div>
<svg style="position:absolute;left:1030px;top:652px" width="15.2" height="9.8" viewBox="0 0 26 16" ><rect x="0" y="0" width="26" height="16" rx=".5" fill="#0a0a0a"/><rect x="2.300" y="2.400" width="21.400" height="11.200" fill="#fff"/><path fill="#0a0a0a" d="M2 2h3.400A3.400 3.400 0 0 1 2 5.400zM24 2h-3.400A3.400 3.400 0 0 0 24 5.400zM2 14h3.400A3.400 3.400 0 0 0 2 10.600zM24 14h-3.400A3.400 3.400 0 0 1 24 10.600z"/><ellipse cx="13" cy="8" rx="3.600" ry="3.900" fill="#fff" stroke="#0a0a0a" stroke-width="2.300"/><path d="M12 6.800l1.400-.9v4.400M11.900 10.400h3" fill="none" stroke="#0a0a0a" stroke-width="1.200"/></svg>
<div class="mb" style="left:1298px;top:647px;"></div>
<svg style="position:absolute;left:1301px;top:652px" width="15.2" height="9.8" viewBox="0 0 26 16" ><rect x="0" y="0" width="26" height="16" rx=".5" fill="#0a0a0a"/><rect x="2.300" y="2.400" width="21.400" height="11.200" fill="#fff"/><path fill="#0a0a0a" d="M2 2h3.400A3.400 3.400 0 0 1 2 5.400zM24 2h-3.400A3.400 3.400 0 0 0 24 5.400zM2 14h3.400A3.400 3.400 0 0 0 2 10.600zM24 14h-3.400A3.400 3.400 0 0 1 24 10.600z"/><ellipse cx="13" cy="8" rx="3.600" ry="3.900" fill="#fff" stroke="#0a0a0a" stroke-width="2.300"/><path d="M12 6.800l1.400-.9v4.400M11.900 10.400h3" fill="none" stroke="#0a0a0a" stroke-width="1.200"/></svg>
<div class="b" style="left:213px;top:677px;width:1121px;height:42px;background:#f6f6f6;border-top:1px solid #e7e7e7"></div>
<div class="btn" style="left:236px;top:684px;width:129px;height:29px;"></div>
<svg style="position:absolute;left:254.2px;top:691.8px" width="15.4" height="12.4" viewBox="0 0 20 16" ><path d="M2.200 8.300l5.300 5.200L17.800 2.800" fill="none" stroke="#555" stroke-width="4.300"/></svg>
<div class="t" style="top:691px;font-size:15.5px;color:#555;left:274.20px;transform:scaleX(0.9451);">Сохранить</div>
<div class="btn" style="left:371px;top:684px;width:94px;height:29px;"></div>
<div class="t" style="top:691px;font-size:15.5px;color:#555;left:389.40px;transform:scaleX(0.9680);">Незаезд</div>
<div class="btn" style="left:471px;top:684px;width:100px;height:29px;background:#3c9b54;border-color:#3c9b54;"></div>
<div class="t" style="top:691px;font-size:15.5px;color:#fff;left:489.00px;transform:scaleX(0.9387);">Поселить</div>
<div class="btn" style="left:577px;top:684px;width:153px;height:29px;"></div>
<div class="t" style="top:691px;font-size:15.5px;color:#555;left:595.60px;transform:scaleX(0.9479);">В лист ожидания</div>
<div class="btn" style="left:736px;top:684px;width:134px;height:29px;"></div>
<div class="t" style="top:691px;font-size:15.5px;color:#555;left:754.00px;transform:scaleX(0.9573);">Аннулировать</div>
<div class="btn" style="left:876px;top:684px;width:160px;height:29px;"></div>
<div class="t" style="top:691px;font-size:15.5px;color:#555;left:894.50px;transform:scaleX(0.9503);">Аннулировать все</div>
<div class="btn" style="left:1042px;top:684px;width:113px;height:29px;"></div>
<div class="t" style="top:691px;font-size:15.5px;color:#555;left:1060.80px;transform:scaleX(0.9650);">Опоздание</div>
<div class="btn" style="left:1229px;top:684px;width:93px;height:29px;"></div>
<div class="t" style="top:691px;font-size:15.5px;color:#3a7ab8;left:1247.30px;transform:scaleX(0.9530);">Закрыть</div>
<div class="b" style="left:749px;top:645px;width:108px;height:60px;border:3px solid #fe0000;border-radius:2.500px"></div>
<div class="b" style="left:771px;top:675px;width:74px;height:26.500px;background:#f7edb0;border:1px solid #e4da98"></div>
<div class="t" style="top:681px;font-size:14px;color:#111;left:780.00px;transform:scaleX(0.9023);">Оплатить</div>
<div class="b" style="left:0;top:719px;width:1334px;height:33px;background:#6e6e6e"></div>
<div class="btn" style="left:7px;top:723px;width:142px;height:28px;border-color:#fff"></div>
<svg style="position:absolute;left:24.9px;top:729.3px" width="14" height="14" viewBox="0 0 20 20" ><circle cx="10" cy="10" r="10" fill="#484848"/><path d="M6.800 7.600c0-1.900 1.400-3.100 3.300-3.100s3.300 1.100 3.300 2.800c0 2.300-3.200 2.500-3.200 4.900" fill="none" stroke="#fff" stroke-width="2.400"/><rect x="8.900" y="13.400" width="2.500" height="2.500" fill="#fff"/></svg>
<div class="t" style="top:729px;font-size:16px;color:#555;left:43.00px;transform:scaleX(0.9115);">Справка (F1)</div>
<div class="t" style="top:730px;font-size:14.5px;color:#dcdcdc;left:1099.20px;transform:scaleX(0.8721);">Cranberry Palace</div>
<div class="t" style="top:730px;font-size:14.5px;color:#fff;font-weight:700;left:1203.30px;transform:scaleX(0.8914);">10 февраля 2022 г.</div>
</body></html>
